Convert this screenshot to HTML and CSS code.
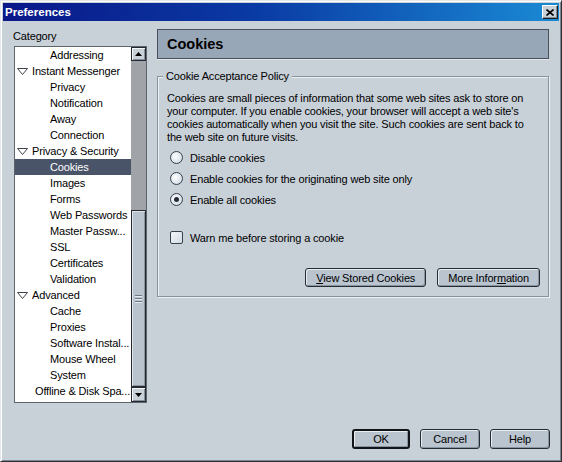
FILE: index.html
```html
<!DOCTYPE html>
<html>
<head>
<meta charset="utf-8">
<title>Preferences</title>
<link rel="stylesheet" href="styles.css">
</head>
<body>
<div class="window">
  <div class="titlebar">
    <span class="title">Preferences</span>
    <button class="close" aria-label="Close">
      <svg width="8" height="7" viewBox="0 0 8 7"><path d="M0.5 0.5 L7.5 6.5 M7.5 0.5 L0.5 6.5" stroke="#000" stroke-width="1.6" fill="none"/></svg>
    </button>
  </div>
  <div class="main">
    <div class="sidebar">
      <div class="label">Category</div>
      <div class="treebox">
        <ul class="tree">
          <li class="row child">Addressing</li>
          <li class="row parent"><svg class="twisty" width="11" height="7" viewBox="0 0 11 7"><polygon points="0.5,0.5 10.5,0.5 5.5,6.5" fill="#fff" stroke="#3c444c"/></svg>Instant Messenger</li>
          <li class="row child">Privacy</li>
          <li class="row child">Notification</li>
          <li class="row child">Away</li>
          <li class="row child">Connection</li>
          <li class="row parent"><svg class="twisty" width="11" height="7" viewBox="0 0 11 7"><polygon points="0.5,0.5 10.5,0.5 5.5,6.5" fill="#fff" stroke="#3c444c"/></svg>Privacy &amp; Security</li>
          <li class="row child selected">Cookies</li>
          <li class="row child">Images</li>
          <li class="row child">Forms</li>
          <li class="row child">Web Passwords</li>
          <li class="row child">Master Passw...</li>
          <li class="row child">SSL</li>
          <li class="row child">Certificates</li>
          <li class="row child">Validation</li>
          <li class="row parent"><svg class="twisty" width="11" height="7" viewBox="0 0 11 7"><polygon points="0.5,0.5 10.5,0.5 5.5,6.5" fill="#fff" stroke="#3c444c"/></svg>Advanced</li>
          <li class="row child">Cache</li>
          <li class="row child">Proxies</li>
          <li class="row child">Software Instal...</li>
          <li class="row child">Mouse Wheel</li>
          <li class="row child">System</li>
          <li class="row top">Offline &amp; Disk Spa...</li>
        </ul>
        <div class="scrollbar">
          <div class="sb-btn"><svg width="7" height="4" viewBox="0 0 7 4"><polygon points="0,4 3.5,0 7,4" fill="#000"/></svg></div>
          <div class="sb-track"></div>
          <div class="sb-thumb"><span class="grip"></span></div>
          <div class="sb-btn down"><svg width="7" height="4" viewBox="0 0 7 4"><polygon points="0,0 7,0 3.5,4" fill="#000"/></svg></div>
        </div>
      </div>
    </div>
    <div class="panel">
      <div class="panel-header">Cookies</div>
      <fieldset class="group">
        <legend>Cookie Acceptance Policy</legend>
        <p class="desc">Cookies are small pieces of information that some web sites ask to store on<br>your computer. If you enable cookies, your browser will accept a web site's<br>cookies automatically when you visit the site. Such cookies are sent back to<br>the web site on future visits.</p>
        <div class="opt-row first"><span class="radio"></span>Disable cookies</div>
        <div class="opt-row"><span class="radio"></span>Enable cookies for the originating web site only</div>
        <div class="opt-row"><span class="radio checked"></span>Enable all cookies</div>
        <div class="opt-row check-row"><span class="checkbox"></span>Warn me before storing a cookie</div>
        <div class="group-buttons">
          <button class="btn"><u>V</u>iew Stored Cookies</button>
          <button class="btn">More Infor<u>m</u>ation</button>
        </div>
      </fieldset>
    </div>
  </div>
  <div class="footer">
    <button class="btn dlg default">OK</button>
    <button class="btn dlg">Cancel</button>
    <button class="btn dlg">Help</button>
  </div>
</div>
</body>
</html>
```

FILE: styles.css
```css
html, body {
  margin: 0;
  padding: 0;
  background: #c8d0d8;
}

body {
  font-family: "Liberation Sans", Arial, sans-serif;
  font-size: 11px;
  letter-spacing: -0.15px;
  color: #000;
}

.window {
  width: 562px;
  height: 462px;
  box-sizing: border-box;
  border: 1px solid;
  border-color: #e4e8ec #2c3034 #2c3034 #e4e8ec;
  box-shadow: inset 1px 1px 0 #ffffff, inset -1px -1px 0 #7c8590;
  padding: 2px;
  display: flex;
  flex-direction: column;
  background: #c8d0d8;
}

.titlebar {
  height: 18px;
  flex: none;
  display: flex;
  align-items: center;
  justify-content: space-between;
  padding: 0 1px 0 2px;
  background: linear-gradient(to right, #0a1888 0%, #0a3aa4 45%, #1a8ad4 100%);
  color: #fff;
  font-weight: bold;
  font-size: 11.5px;
  letter-spacing: 0;
}

.close {
  width: 16px;
  height: 14px;
  padding: 0;
  box-sizing: border-box;
  background: #c8d0d8;
  border: 1px solid;
  border-color: #ffffff #1c2024 #1c2024 #ffffff;
  box-shadow: inset -1px -1px 0 #848c94;
  display: flex;
  align-items: center;
  justify-content: center;
}

.main {
  display: flex;
  gap: 10px;
  padding: 8px 10px 0 10px;
}

.sidebar {
  width: 134px;
  flex: none;
}

.label {
  margin-top: 1px;
  height: 13px;
  line-height: 13px;
}

.treebox {
  margin: 3px 0 0 1px;
  width: 133px;
  height: 357px;
  box-sizing: border-box;
  border: 1px solid #5c646c;
  display: flex;
  background: #fff;
}

.tree {
  list-style: none;
  margin: 0;
  padding: 0;
  flex: 1;
  min-width: 0;
  overflow: hidden;
}

.row {
  height: 16px;
  line-height: 16px;
  white-space: nowrap;
  display: flex;
  align-items: center;
}

.row.child {
  padding-left: 35px;
}

.row.parent {
  padding-left: 2px;
}

.row.top {
  padding-left: 20px;
}

.twisty {
  margin-right: 4px;
  flex: none;
}

.row.selected {
  background: #4a5468;
  color: #fff;
}

.scrollbar {
  width: 15px;
  flex: none;
  display: flex;
  flex-direction: column;
  background: #a0a5aa;
}

.sb-btn {
  height: 14px;
  flex: none;
  box-sizing: border-box;
  border: 1px solid #262a30;
  background: #c8d0d8;
  box-shadow: inset 1px 1px 0 #f4f6f8, inset -1px -1px 0 #8890a0;
  display: flex;
  align-items: center;
  justify-content: center;
}

.sb-btn.down {
  height: 15px;
}

.sb-track {
  height: 149px;
  flex: none;
  background: #a0a4a9;
}

.sb-thumb {
  flex: 1;
  box-sizing: border-box;
  border: 1px solid #262a30;
  background: #b9c3ce;
  box-shadow: inset 1px 1px 0 #dfe5eb, inset -1px -1px 0 #8a95a2;
  display: flex;
  align-items: center;
  justify-content: center;
}

.grip {
  width: 7px;
  height: 8px;
  background: repeating-linear-gradient(to bottom, #6c7886 0, #6c7886 1px, #e6ebf0 1px, #e6ebf0 2px, transparent 2px, transparent 3px);
}

.panel {
  width: 392px;
  flex: none;
}

.panel-header {
  height: 30px;
  box-sizing: border-box;
  border: 1px solid #48505a;
  box-shadow: 0 1px 0 #e6eaee;
  background: #98a7b7;
  padding-left: 9px;
  display: flex;
  align-items: center;
  font-size: 14.5px;
  font-weight: bold;
  letter-spacing: 0;
}

.group {
  margin: 11px 0 0 0;
  padding: 0 8px 9px 9px;
  border: 1px solid #8a929c;
  box-shadow: inset 1px 1px 0 #eef1f4, 1px 1px 0 #eef1f4;
  min-width: 0;
}

.group legend {
  padding: 0 3px;
  margin-left: -4px;
  line-height: 13px;
  background: #c8d0d8;
}

.desc {
  margin: 9px 0 0 0;
  line-height: 13px;
}

.opt-row {
  height: 21px;
  display: flex;
  align-items: center;
  padding-left: 3px;
  gap: 7px;
}

.opt-row.first {
  margin-top: 3px;
}

.check-row {
  margin-top: 17px;
}

.radio {
  width: 13px;
  height: 13px;
  box-sizing: border-box;
  border-radius: 50%;
  border: 1px solid #38404a;
  background: radial-gradient(circle at 40% 40%, #ffffff 0%, #e6ecf2 45%, #c4cfda 100%);
  display: flex;
  align-items: center;
  justify-content: center;
  flex: none;
}

.radio.checked::after {
  content: "";
  width: 5px;
  height: 5px;
  border-radius: 50%;
  background: #262c34;
}

.checkbox {
  width: 13px;
  height: 13px;
  box-sizing: border-box;
  border: 1px solid #38404a;
  border-radius: 2px;
  background: linear-gradient(135deg, #f4f7fa, #d2dbe4);
  flex: none;
}

.group-buttons {
  display: flex;
  justify-content: flex-end;
  gap: 11px;
  margin-top: 20px;
}

.btn {
  height: 19px;
  box-sizing: border-box;
  padding: 0 10px;
  font-family: "Liberation Sans", Arial, sans-serif;
  font-size: 11px;
  letter-spacing: -0.15px;
  color: #000;
  border: 1px solid #262c34;
  border-radius: 3px;
  background: #b9c4cf;
  box-shadow: inset 1px 1px 0 #e8ecf0, inset -1px -1px 0 #8994a0;
}

.footer {
  margin-top: auto;
  display: flex;
  justify-content: flex-end;
  gap: 10px;
  padding: 0 9px 10px 0;
}

.dlg {
  height: 20px;
  width: 60px;
  padding: 0;
}

.dlg.default {
  width: 58px;
  border: 2px solid #101418;
}
```
